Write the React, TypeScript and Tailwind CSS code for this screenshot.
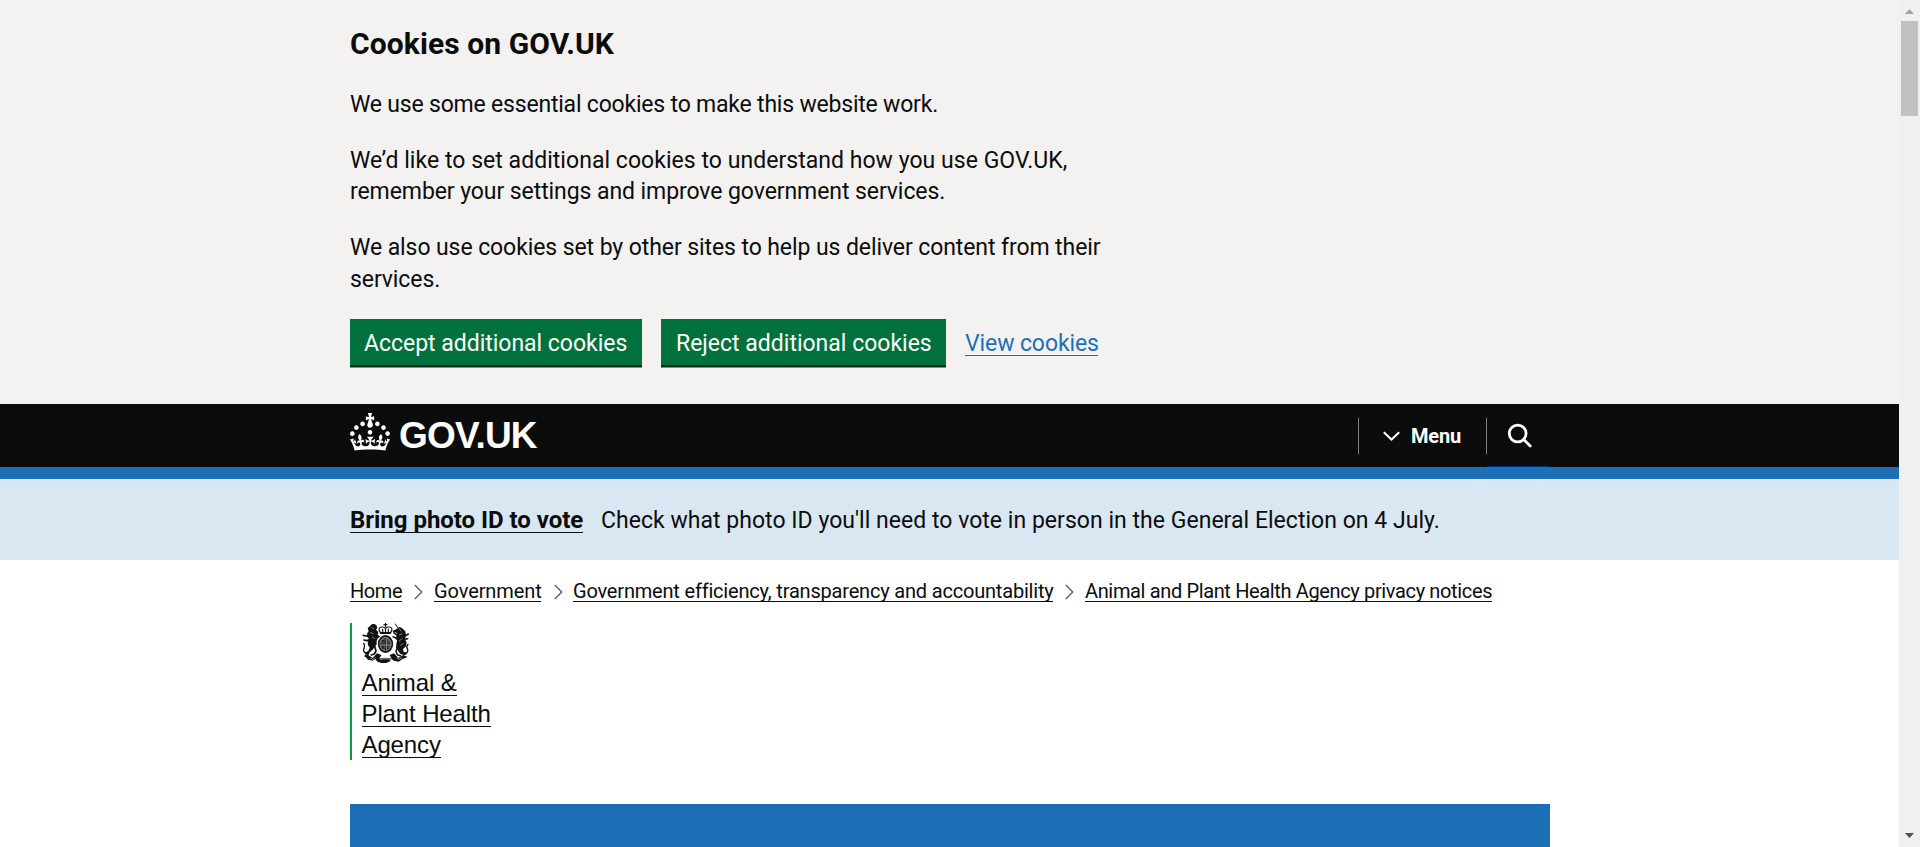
import type { ReactNode } from "react";

function Crown() {
  return (
    <svg viewBox="0 0 32 30" className="h-[37.5px] w-[40px] shrink-0 fill-white" aria-hidden="true">
      <path d="M22.6 10.4c-1 .4-2-.1-2.4-1-.4-.9.1-2 1-2.4.9-.4 2 .1 2.4 1s-.1 2-1 2.4m-5.9 6.7c-.9.4-2-.1-2.4-1-.4-.9.1-2 1-2.4.9-.4 2 .1 2.4 1s-.1 2-1 2.4m10.8-3.7c-1 .4-2-.1-2.4-1-.4-.9.1-2 1-2.4.9-.4 2 .1 2.4 1s0 2-1 2.4m3.3 4.8c-1 .4-2-.1-2.4-1-.4-.9.1-2 1-2.4.9-.4 2 .1 2.4 1s-.1 2-1 2.4M17 4.7l2.3 1.2V2.5l-2.3.7-.2-.2.9-3h-3.4l.9 3-.2.2c-.1.1-2.3-.7-2.3-.7v3.4L15 4.7c.1.1.1.2.2.2l-1.3 4c-.1.2-.1.4-.1.6 0 1.1.8 2 1.9 2.2h.7c1-.2 1.9-1.1 1.9-2.1 0-.2 0-.4-.1-.6l-1.3-4c-.1-.2 0-.2.1-.3m-7.6 5.7c.9.4 2-.1 2.4-1 .4-.9-.1-2-1-2.4-.9-.4-2 .1-2.4 1s0 2 1 2.4m-5 3c.9.4 2-.1 2.4-1 .4-.9-.1-2-1-2.4-.9-.4-2 .1-2.4 1s.1 2 1 2.4m-3.2 4.8c.9.4 2-.1 2.4-1 .4-.9-.1-2-1-2.4-.9-.4-2 .1-2.4 1s0 2 1 2.4m14.8 11c4.4 0 8.6.3 12.3.8 1.1-4.5 2.4-7 3.7-8.8l-2.5-.9c.2 1.3.3 1.9 0 2.7-.4-.4-.8-1.1-1.1-2.3l-1.2 4c.7-.5 1.3-.8 2-.9-1.1 2.5-2.6 3.1-3.5 3-1.1-.2-1.7-1.2-1.5-2.1.3-1.2 1.5-1.5 2.1-.1 1.1-2.3-.8-3-2-2.3 1.9-1.9 2.1-3.5.6-5.6-2.1 1.6-2.1 3.2-1.2 5.5-1.2-1.4-3.2-.6-2.5 1.6.9-1.4 2.1-.5 1.9.8-.2 1.1-1.7 2.1-3.5 1.9-2.7-.2-2.9-2.1-2.9-3.6.7-.1 1.9.5 2.9 1.9l.4-4.3c-1.1 1.1-2.1 1.4-3.2 1.4.4-1.2 2.1-3 2.1-3h-5.4s1.7 1.9 2.1 3c-1.1 0-2.1-.2-3.2-1.4l.4 4.3c1-1.4 2.2-2 2.9-1.9-.1 1.5-.2 3.4-2.9 3.6-1.9.2-3.4-.8-3.5-1.9-.2-1.3 1-2.2 1.9-.8.7-2.3-1.2-3-2.5-1.6.9-2.2.9-3.9-1.2-5.5-1.5 2-1.3 3.7.6 5.6-1.2-.7-3.1 0-2 2.3.6-1.4 1.8-1.1 2.1.1.2.9-.3 1.9-1.5 2.1-.9.2-2.4-.5-3.5-3 .6 0 1.2.3 2 .9l-1.2-4c-.3 1.1-.7 1.9-1.1 2.3-.3-.8-.2-1.4 0-2.7l-2.9.9C1.3 23 2.6 25.5 3.7 30c3.7-.5 7.9-.8 12.3-.8" />
    </svg>
  );
}

function RoyalArms() {
  return (
    <svg viewBox="0 0 144 120" className="block h-[40px] w-[48px]" fill="none" stroke="#111" strokeLinecap="round" strokeLinejoin="round" aria-hidden="true">
      {/* crown */}
      <path d="M70.500 1v10M66 5h9" strokeWidth="3.500" />
      <path d="M55 28c-7-8-4-16 5-16 4 0 8 2 10.500 4 2.500-2 6.500-4 10.500-4 9 0 12 8 5 16M70.500 17v10M62 19v7M79 19v7" strokeWidth="3.500" />
      <path d="M56 30h29" strokeWidth="5.500" />
      {/* shield inside the garter */}
      <ellipse cx="70.500" cy="63" rx="23" ry="27" fill="#151515" stroke="none" />
      <ellipse cx="70.500" cy="63" rx="17" ry="20" fill="#555" stroke="#aaa" strokeWidth="2" />
      <path d="M70.500 47v34M56 63h29M61 53h6M61 57h6M75 53l5 6M61 69v7M65 69v7M75 71h6M75 76h4" stroke="#1a1a1a" strokeWidth="3" />
      <path d="M73 48v30M58 66h26" stroke="#bbb" strokeWidth="1.800" />
      {/* lion */}
      <path d="M26 7c5-6 14-5 18 1l2 7-4 5 7 7-2 8 8 6-7 4-4 8 0 11-6 8-6 8-8 7-5 9-10-2 2-6 8-4 4-10-5-8-1-10 4-9-7-7 2-10 4-5-3-9z" fill="#111" stroke="none" />
      <path d="M24 38l-11 1-9-2M26 48l-12 5-8-2M38 70l4 14-5 9-9 3" strokeWidth="5" />
      <path d="M18 92c-12-2-16-8-12-16s1-10-1-15M18 96l-8 1" strokeWidth="4" />
      <path d="M28 14l7 3M25 29l9 3M31 42l7 5" stroke="#bbb" strokeWidth="1.800" />
      {/* unicorn */}
      <path d="M100 3l10 15" strokeWidth="3" />
      <path d="M105 17l8-6 9 6 8 8 2 12-3 11 5 11-2 11-9 8 2 9 11 5-8 5-13-4-7-10-6-9 1-10 2-12-4-8 4-8-2-8-8 2-3-6z" fill="#111" stroke="none" />
      <path d="M106 48l-13-7M107 38l-11-8M126 41l13-8M126 49l11-2M106 74l-4 11 4 10 9 3" strokeWidth="4.500" />
      <path d="M126 90c11 1 14-6 10-13s-1-9 2-13" strokeWidth="4" />
      <path d="M112 17l4 7M112 36l8-4M112 54l9-8M116 67l8-5" stroke="#ccc" strokeWidth="1.800" />
      {/* motto ribbon */}
      <path d="M5 101l13-5 14 9 13-14 13 5-6 11c12-4 26-4 37 0l-6-11 13-5 13 14 14-9 14 6-15 6-12 8-14-3-8-5-6 8c-11 5-12 4-12 4s-12 1-24-4l-6-8-8 5-14-3-7-8z" fill="#111" stroke="none" />
      <path d="M56 109c9-3 20-3 29 0M26 106l7 4 6-6M105 105l7 4 7-4" stroke="#bbb" strokeWidth="2.500" />
    </svg>
  );
}

function Crumb({ className, children }: { className: string; children: ReactNode }) {
  return (
    <a href="#" className={`block h-[21px] border-b border-[#0b0c0c] text-[20px] leading-[21px] whitespace-nowrap ${className}`}>
      {children}
    </a>
  );
}

function CrumbArrow({ className }: { className: string }) {
  return (
    <svg viewBox="0 0 9 16" className={`h-[16px] w-[9px] shrink-0 ${className}`} fill="none" stroke="#505a5f" strokeWidth="1.25" aria-hidden="true">
      <path d="M.8 1l7 7-7 7" />
    </svg>
  );
}

function CookieButton({ className, children }: { className: string; children: ReactNode }) {
  return (
    <button type="button" className={`h-[46px] bg-[#00703c] pt-[3px] text-left text-[23px] leading-[43px] whitespace-nowrap text-white shadow-[0_2.5px_0_#002d18] ${className}`}>
      {children}
    </button>
  );
}

export default function App() {
  return (
    <div className="flex h-[847px] w-[1920px] overflow-hidden bg-white font-['Roboto',sans-serif] text-[#0b0c0c]">
      <div className="flex min-w-0 flex-1 flex-col">
        <section className="h-[404px] shrink-0 bg-[#f3f2f1] pt-[25px] pl-[350px]">
          <h2 className="text-[30px] leading-[37px] font-bold tracking-[0.09px]">Cookies on GOV.UK</h2>
          <div className="mt-[27px] text-[23px] leading-[31.5px] whitespace-nowrap">
            <p className="tracking-[-0.2px]">We use some essential cookies to make this website work.</p>
            <p className="mt-[24px] tracking-[0.04px]">
              We’d like to set additional cookies to understand how you use GOV.UK,
              <br />
              <span className="tracking-[-0.08px]">remember your settings and improve government services.</span>
            </p>
            <p className="mt-[24.5px] tracking-[-0.09px]">
              We also use cookies set by other sites to help us deliver content from their
              <br />
              services.
            </p>
          </div>
          <div className="mt-[24px] flex items-start">
            <CookieButton className="w-[292px] pl-[14px] tracking-[-0.02px]">Accept additional cookies</CookieButton>
            <CookieButton className="ml-[19px] w-[285px] pl-[15px]">Reject additional cookies</CookieButton>
            <a href="#" className="mt-[10px] ml-[19px] block h-[27px] w-[133px] border-b border-[#1d70b8] text-[23px] leading-[29px] tracking-[-0.1px] whitespace-nowrap text-[#1d70b8]">
              View cookies
            </a>
          </div>
        </section>

        <header className="flex h-[75px] shrink-0 border-b-[12px] border-[#1d70b8] bg-[#0b0c0c] pl-[350px] text-white">
          <a href="#" className="flex w-[1008px] items-start pt-[9px]">
            <Crown />
            <span className="mt-[2px] ml-[9px] font-['Liberation_Sans',sans-serif] text-[37px] leading-[42px] font-bold tracking-[-0.8px]">GOV.UK</span>
          </a>
          <button type="button" className="mt-[14px] flex h-[36px] w-[128px] items-center border-l border-[#b1b4b6]/70 pl-[24px]">
            <svg viewBox="0 0 17 10" className="h-[10px] w-[17px]" fill="none" stroke="#fff" strokeWidth="2" aria-hidden="true">
              <path d="M.8 1.200l7.700 7.300 7.700-7.300" />
            </svg>
            <span className="ml-[11px] text-[20px] leading-[24px] font-bold tracking-[-0.2px]">Menu</span>
          </button>
          <div className="flex h-[63px] w-[64px] flex-col">
            <button type="button" className="mt-[14px] h-[36px] border-l border-[#b1b4b6]/70 pl-[20px]">
              <svg viewBox="0 0 26 26" className="block h-[26px] w-[26px]" fill="none" stroke="#fff" strokeWidth="2.800" strokeLinecap="round" aria-hidden="true">
                <circle cx="10.700" cy="10.500" r="8.400" />
                <path d="M16.700 16.500l6.500 6.500" />
              </svg>
            </button>
            <div className="mt-auto ml-[1px] h-px bg-[#003078]" />
          </div>
        </header>

        <section className="flex h-[81px] shrink-0 bg-[#d9e7f2] pt-[28px] pl-[350px] whitespace-nowrap">
          <a href="#" className="block h-[26px] w-[233px] border-b border-[#0b0c0c] text-[24px] leading-[26px] font-bold tracking-[-0.03px]">
            Bring photo ID to vote
          </a>
          <p className="ml-[18px] text-[23px] leading-[27px] tracking-[0.03px]">
            Check what photo ID you'll need to vote in person in the General Election on 4 July.
          </p>
        </section>

        <nav className="flex shrink-0 items-start pt-[21px] pl-[350px]">
          <Crumb className="w-[52px] tracking-[-0.4px]">Home</Crumb>
          <CrumbArrow className="mt-[3px] ml-[12px]" />
          <Crumb className="ml-[11px] w-[107px] tracking-[-0.1px]">Government</Crumb>
          <CrumbArrow className="mt-[3px] ml-[13px]" />
          <Crumb className="ml-[10px] w-[480px] tracking-[-0.19px]">Government efficiency, transparency and accountability</Crumb>
          <CrumbArrow className="mt-[3px] ml-[12px]" />
          <Crumb className="ml-[11px] w-[407px] tracking-[-0.36px]">Animal and Plant Health Agency privacy notices</Crumb>
        </nav>

        <div className="mt-[21px] ml-[350px] h-[137px] w-[240px] shrink-0 border-l-2 border-[#00a33b] pl-[10px]">
          <RoyalArms />
          <a href="#" className="mt-[5px] -ml-[0.5px] flex flex-col items-start gap-[3px] font-['Liberation_Sans',sans-serif] text-[24px] tracking-[-0.12px]">
            <span className="h-[28px] border-b border-[#0b0c0c] leading-[29px]">Animal &amp;</span>
            <span className="h-[28px] border-b border-[#0b0c0c] leading-[29px]">Plant Health</span>
            <span className="h-[28px] border-b border-[#0b0c0c] leading-[29px]">Agency</span>
          </a>
        </div>

        <div className="mt-[44px] ml-[350px] h-[43px] w-[1200px] shrink-0 bg-[#1d70b8]" />
      </div>

      <div className="flex w-[21px] shrink-0 flex-col items-center bg-[#f0f0f0]">
        <svg viewBox="0 0 9 5" className="mt-[9px] h-[5px] w-[9px] shrink-0 fill-[#a3a3a3]" aria-hidden="true">
          <path d="M0 5l4.500-5L9 5z" />
        </svg>
        <div className="mt-[7px] h-[95px] w-[17px] shrink-0 bg-[#c1c1c1]" />
        <svg viewBox="0 0 9 5" className="mt-auto mb-[9px] h-[5px] w-[9px] shrink-0 fill-[#505050]" aria-hidden="true">
          <path d="M0 0l4.500 5L9 0z" />
        </svg>
      </div>
    </div>
  );
}
